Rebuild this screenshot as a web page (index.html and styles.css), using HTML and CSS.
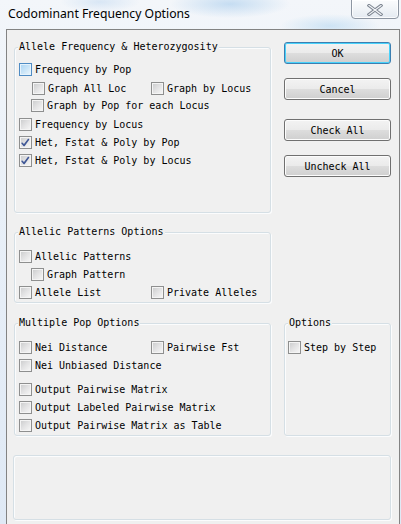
FILE: index.html
```html
<!DOCTYPE html>
<html>
<head>
<meta charset="utf-8">
<link rel="stylesheet" href="styles.css">
</head>
<body>
<div class="window">
  <div class="titlebar">
    <span class="title">Codominant Frequency Options</span>
    <div class="close">
      <svg width="16" height="12" viewBox="0 0 16 12">
        <path d="M2 1.5 L14 10.5 M14 1.5 L2 10.5" stroke="#7d8591" stroke-width="3.2" stroke-linecap="square" fill="none"/>
        <path d="M2 1.5 L14 10.5 M14 1.5 L2 10.5" stroke="#f7f9fb" stroke-width="1.2" stroke-linecap="square" fill="none"/>
      </svg>
    </div>
  </div>
  <div class="client">
    <div class="main">
      <div class="group g1">
        <span class="legend">Allele Frequency &amp; Heterozygosity</span>
        <div class="row h19"><label class="cb"><i class="box hover"></i>Frequency by Pop</label></div>
        <div class="row h17"><label class="cb ind1"><i class="box"></i>Graph All Loc</label><label class="cb"><i class="box"></i>Graph by Locus</label></div>
        <div class="row h19"><label class="cb ind"><i class="box"></i>Graph by Pop for each Locus</label></div>
        <div class="row"><label class="cb"><i class="box"></i>Frequency by Locus</label></div>
        <div class="row"><label class="cb"><i class="box checked"><svg width="13" height="13" viewBox="0 0 13 13"><polygon points="3,6.2 5,8 9.2,2.4 10.4,3.4 5.6,10.2 4.6,10.2 2.2,7.2" fill="#3f5796"/></svg></i>Het, Fstat &amp; Poly by Pop</label></div>
        <div class="row"><label class="cb"><i class="box checked"><svg width="13" height="13" viewBox="0 0 13 13"><polygon points="3,6.2 5,8 9.2,2.4 10.4,3.4 5.6,10.2 4.6,10.2 2.2,7.2" fill="#3f5796"/></svg></i>Het, Fstat &amp; Poly by Locus</label></div>
      </div>
      <div class="buttons">
        <button class="btn default">OK</button>
        <button class="btn">Cancel</button>
        <button class="btn gap">Check All</button>
        <button class="btn">Uncheck All</button>
      </div>
      <div class="group g2">
        <span class="legend">Allelic Patterns Options</span>
        <div class="row"><label class="cb"><i class="box"></i>Allelic Patterns</label></div>
        <div class="row"><label class="cb ind"><i class="box"></i>Graph Pattern</label></div>
        <div class="row"><label class="cb"><i class="box"></i>Allele List</label><label class="cb"><i class="box"></i>Private Alleles</label></div>
      </div>
      <div class="group g3">
        <span class="legend">Multiple Pop Options</span>
        <div class="row"><label class="cb"><i class="box"></i>Nei Distance</label><label class="cb"><i class="box"></i>Pairwise Fst</label></div>
        <div class="row h24"><label class="cb"><i class="box"></i>Nei Unbiased Distance</label></div>
        <div class="row"><label class="cb"><i class="box"></i>Output Pairwise Matrix</label></div>
        <div class="row"><label class="cb"><i class="box"></i>Output Labeled Pairwise Matrix</label></div>
        <div class="row"><label class="cb"><i class="box"></i>Output Pairwise Matrix as Table</label></div>
      </div>
      <div class="group g4">
        <span class="legend">Options</span>
        <div class="row single"><label class="cb wide"><i class="box"></i>Step by Step</label></div>
      </div>
    </div>
    <div class="group status"></div>
  </div>
</div>
</body>
</html>
```
FILE: styles.css
```css
* { box-sizing: border-box; }
html, body { margin: 0; padding: 0; }
body {
  width: 401px;
  height: 524px;
  overflow: hidden;
  background:
    radial-gradient(ellipse 60px 14px at 230px 4px, rgba(160,200,235,0.55), rgba(160,200,235,0) 100%),
    radial-gradient(ellipse 50px 12px at 330px 26px, rgba(170,210,240,0.5), rgba(170,210,240,0) 100%),
    radial-gradient(ellipse 40px 10px at 100px 2px, rgba(190,215,240,0.5), rgba(190,215,240,0) 100%),
    linear-gradient(180deg, #f3f6fa 0%, #e9f0f8 40%, #dfe9f5 100%);
  font-family: "DejaVu Sans Mono", "Liberation Mono", monospace;
  font-size: 10px;
  color: #000;
}
.window {
  width: 401px;
  height: 524px;
  display: flex;
  flex-direction: column;
}
.titlebar {
  height: 29px;
  flex: none;
  display: flex;
  justify-content: space-between;
  align-items: flex-start;
  padding-left: 8px;
}
.title {
  font-family: "Noto Sans", "Open Sans", sans-serif;
  font-size: 12.2px;
  line-height: 18px;
  padding-top: 5px;
  color: #000;
}
.close {
  width: 48px;
  height: 20px;
  margin-top: -1px;
  margin-right: 2px;
  border: 1px solid #8d96a2;
  border-radius: 0 0 4px 4px;
  background: linear-gradient(180deg, #fbfcfd 0%, #eef2f6 60%, #e4eaf1 100%);
  box-shadow: inset 0 0 0 1px rgba(255,255,255,0.8);
  display: flex;
  align-items: center;
  justify-content: center;
  padding-top: 2px;
}
.client {
  margin-left: 6px;
  width: 394px;
  flex: 1;
  background: #f0f0f0;
  border: 1px solid #838383;
  border-bottom: none;
  padding: 12px 0 0 7px;
}
.main {
  display: grid;
  grid-template-columns: 257px 107px;
  column-gap: 13px;
  align-items: start;
}
.group {
  position: relative;
  border: 1px solid #d5dfe5;
  border-radius: 3px;
  box-shadow: inset 1px 1px 0 #fbfcfd, 1px 1px 0 #fbfcfd;
  padding: 17px 0 0 4px;
}
.legend {
  position: absolute;
  top: -7px;
  left: 3px;
  padding: 0 1px;
  background: #f0f0f0;
  line-height: 12px;
  white-space: nowrap;
}
.g1 { grid-column: 1; grid-row: 1; margin-top: 5px; height: 166px; padding-top: 15px; }
.buttons { grid-column: 2; grid-row: 1; display: flex; flex-direction: column; }
.g2 { grid-column: 1; grid-row: 2; margin-top: 19px; height: 71px; }
.g3 { grid-column: 1; grid-row: 3; margin-top: 20px; height: 113px; }
.g4 { grid-column: 2; grid-row: 3; margin-top: 20px; height: 113px; padding-left: 3px; }
.status { margin-top: 19px; margin-left: -1px; width: 378px; height: 65px; }

.row {
  height: 18px;
  display: grid;
  grid-template-columns: 132px auto;
  align-items: start;
}
.row.single { grid-template-columns: auto; }
.h19 { height: 19px; }
.h17 { height: 17px; }
.h24 { height: 24px; }
.cb {
  display: flex;
  align-items: flex-start;
  line-height: 13px;
  white-space: nowrap;
}
.ind { padding-left: 12px; }
.ind1 { padding-left: 13px; }
.box {
  flex: none;
  width: 13px;
  height: 13px;
  margin-right: 3px;
  border: 1px solid #8e8f8f;
  background: linear-gradient(135deg, #c9cacb 0%, #e3e3e4 50%, #f8f8f8 100%);
  box-shadow: inset 0 0 0 1px #f4f4f4;
  position: relative;
}
.box.hover {
  border-color: #4f8cc4;
  background: linear-gradient(135deg, #a9d3f3 0%, #cce6f8 55%, #eef7fd 100%);
  box-shadow: inset 0 0 0 1px #e6f3fc;
}
.box svg {
  position: absolute;
  left: -1px;
  top: -1px;
}
.btn {
  width: 107px;
  height: 22px;
  margin: 0 0 14px 0;
  padding: 0;
  font-family: "DejaVu Sans Mono", "Liberation Mono", monospace;
  font-size: 10px;
  color: #000;
  border: 1px solid #707070;
  border-radius: 3px;
  background: linear-gradient(180deg, #f3f3f3 0%, #ebebeb 48%, #dddddd 52%, #cfcfcf 100%);
  box-shadow: inset 0 0 0 1px #fcfcfc;
}
.btn.default {
  border-color: #3c7fb1;
  box-shadow: inset 0 0 0 1px #48d2fb;
}
.btn.gap { margin-top: 5px; }
```
